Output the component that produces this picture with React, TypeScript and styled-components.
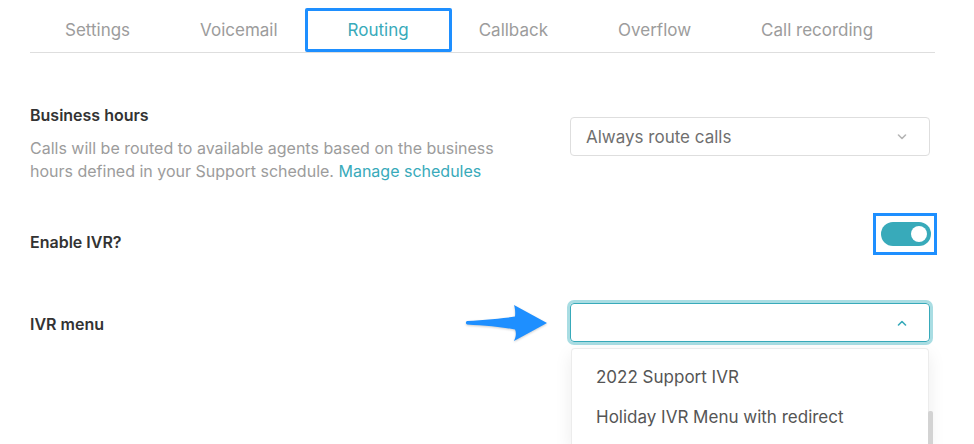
import styled, { createGlobalStyle } from "styled-components";

/*--------------------------
    Colors
--------------------------*/
const Colors = {
    Teal: "#38aaba",
    TealRing: "#a9dde3",
    Marker: "#1e8fff",
    Label: "#333333",
    Muted: "#9c9c9c",
    Text: "#555555",
    Line: "#dedede",
};

const GlobalStyle = createGlobalStyle`
    body {
        margin: 0;
        background: #fff;
        font-family: Inter, "Noto Sans", "Liberation Sans", sans-serif;
        -webkit-font-smoothing: antialiased;
    }
`;

/*--------------------------
    Styled
--------------------------*/
const Page = styled.div`
    width: 905px;
    margin: 0 0 0 30px;
`;

const TabBar = styled.div`
    display: flex;
    padding: 8px 0 0 0;
    border-bottom: 1px solid ${Colors.Line};
`;
const Tab = styled.div<{ $active?: boolean }>`
    position: relative;
    display: flex;
    height: 44px;
    padding: 0 35px;
    align-items: center;
    color: ${(p) => (p.$active ? Colors.Teal : Colors.Muted)};
    font-size: 17px;

    ${(p) =>
        p.$active &&
        `
        &::after {
            content: "";
            position: absolute;
            inset: 0 -8px 0 -8px;
            border: 3px solid ${Colors.Marker};
            border-radius: 2px;
        }
    `}
`;

const Row = styled.div<{ $top: number }>`
    display: grid;
    grid-template-columns: 1fr 360px;
    margin: ${(p) => p.$top}px 0 0 0;
    padding: 0 5px 0 0;
    column-gap: 40px;
`;
const Label = styled.div`
    color: ${Colors.Label};
    font-size: 16px;
    font-weight: 600;
    line-height: 20px;
`;
const Desc = styled.div`
    max-width: 480px;
    margin: 12px 0 0 0;
    color: ${Colors.Muted};
    font-size: 16px;
    line-height: 23px;

    a {
        color: ${Colors.Teal};
        text-decoration: none;
    }
`;
const Control = styled.div<{ $offset?: number; $align?: string }>`
    position: relative;
    display: flex;
    flex-direction: column;
    align-items: ${(p) => p.$align || "stretch"};
    margin: ${(p) => p.$offset || 0}px 0 0 0;
`;

const Select = styled.div<{ $open?: boolean }>`
    display: flex;
    height: 39px;
    padding: 0 22px 0 15px;
    border: 1px solid ${(p) => (p.$open ? Colors.Teal : Colors.Line)};
    border-radius: 4px;
    box-sizing: border-box;
    align-items: center;
    justify-content: space-between;
    color: #6f6f6f;
    font-size: 17px;
    box-shadow: ${(p) => (p.$open ? `0 0 0 3px ${Colors.TealRing}` : "none")};
`;

const Menu = styled.div`
    position: relative;
    height: 87px;
    margin: 6px 1px 0 1px;
    padding: 8px 0 0 0;
    border: 1px solid #ececec;
    border-bottom: none;
    border-radius: 4px 4px 0 0;
    background: #fff;
    box-shadow: 0 6px 18px rgba(0, 0, 0, 0.08);
`;
const MenuItem = styled.div`
    height: 40px;
    padding: 0 24px;
    color: ${Colors.Text};
    font-size: 17px;
    line-height: 40px;
`;
const ScrollThumb = styled.div`
    position: absolute;
    top: 62px;
    right: -5px;
    width: 5px;
    height: 33px;
    border-radius: 2px 2px 0 0;
    background: #d3d3d3;
`;

const Toggle = styled.div`
    position: relative;
    width: 50px;
    height: 24px;
    margin: 0 -1px 0 0;
    border-radius: 12px;
    background: ${Colors.Teal};

    &::before {
        content: "";
        position: absolute;
        top: 4px;
        right: 4px;
        width: 16px;
        height: 16px;
        border-radius: 50%;
        background: #fff;
    }

    &::after {
        content: "";
        position: absolute;
        inset: -9px -6px -9px -8px;
        border: 3px solid ${Colors.Marker};
    }
`;

const Pointer = styled.svg`
    position: absolute;
    top: -2px;
    left: -110px;
    filter: drop-shadow(0 1px 1px rgba(0, 0, 0, 0.2));
`;

/*--------------------------
    Icons
--------------------------*/
const Chevron = ({ up, color }: { up?: boolean; color: string }) => (
    <svg width="10" height="6" viewBox="0 0 10 6">
        <path
            d={up ? "M1.5 5 L5 1.5 L8.5 5" : "M1.5 1 L5 4.5 L8.5 1"}
            fill="none"
            stroke={color}
            strokeWidth="1.6"
            strokeLinecap="round"
            strokeLinejoin="round"
        />
    </svg>
);

const Arrow = () => (
    <Pointer width="95" height="45" viewBox="0 0 95 45">
        <path
            d="M7 20 C24 19 42 17.5 55 15.5 C55.5 11 55 7 54 4 L87 22 L54 40 C56 36 56.5 32 55 28.5 C42 26 24 24.5 7 23.5 C5.5 22.5 5.5 21 7 20 Z"
            fill={Colors.Marker}
        />
    </Pointer>
);

/*--------------------------
    Main
--------------------------*/
const TABS = ["Settings", "Voicemail", "Routing", "Callback", "Overflow", "Call recording"];
const IVR_MENUS = ["2022 Support IVR", "Holiday IVR Menu with redirect"];

const App = () => {
    return (
        <Page>
            <GlobalStyle />
            <TabBar>
                {TABS.map((tab) => (
                    <Tab key={tab} $active={tab === "Routing"}>
                        {tab}
                    </Tab>
                ))}
            </TabBar>

            <Row $top={52}>
                <div>
                    <Label>Business hours</Label>
                    <Desc>
                        Calls will be routed to available agents based on the business hours defined in your
                        Support schedule. <a href="#">Manage schedules</a>
                    </Desc>
                </div>
                <Control $offset={12}>
                    <Select>
                        Always route calls
                        <Chevron color="#b5b5b5" />
                    </Select>
                </Control>
            </Row>

            <Row $top={49}>
                <Label>Enable IVR?</Label>
                <Control $offset={-10} $align="flex-end">
                    <Toggle />
                </Control>
            </Row>

            <Row $top={62}>
                <Label>IVR menu</Label>
                <Control $offset={-11}>
                    <Arrow />
                    <Select $open>
                        <span />
                        <Chevron up color={Colors.Teal} />
                    </Select>
                    <Menu>
                        {IVR_MENUS.map((item) => (
                            <MenuItem key={item}>{item}</MenuItem>
                        ))}
                        <ScrollThumb />
                    </Menu>
                </Control>
            </Row>
        </Page>
    );
};

export default App;
